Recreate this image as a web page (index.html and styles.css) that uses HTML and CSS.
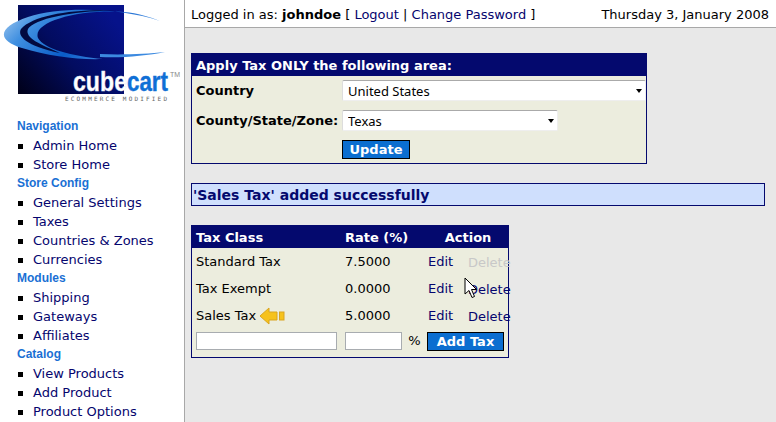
FILE: index.html
```html
<!DOCTYPE html>
<html lang="en">
<head>
    <meta charset="UTF-8">
    <title>CubeCart Admin - Taxes</title>
    <link rel="stylesheet" href="styles.css">
</head>
<body>
    <div class="layout">
        <div class="sidebar">
            <svg class="logo" width="184" height="106" viewBox="0 0 184 106">
                <defs>
                    <linearGradient id="squareFill" x1="0" y1="1" x2="1" y2="0.3">
                        <stop offset="0" stop-color="#000018"/>
                        <stop offset="0.5" stop-color="#020c60"/>
                        <stop offset="1" stop-color="#06128a"/>
                    </linearGradient>
                    <linearGradient id="swooshFill" x1="0" y1="0" x2="1" y2="0.3">
                        <stop offset="0" stop-color="#a9cdf0"/>
                        <stop offset="0.25" stop-color="#3f8fe0"/>
                        <stop offset="0.6" stop-color="#0a5cc8"/>
                        <stop offset="1" stop-color="#5a9ce8"/>
                    </linearGradient>
                </defs>
                <rect x="18" y="5" width="106" height="89" fill="url(#squareFill)"/>
                <path d="M160 21C120 8 62 6 28 17C-2 27-4 40 22 48C48 56 78 60 103 59C72 56 44 49 38 38C32 22 78 9 124 12C138 13 150 17 160 21Z" fill="url(#swooshFill)"/>
                <path d="M122 11C80 8 34 14 21 29C17 36 26 46 60 53C42 45 24 38 28 29C34 18 82 9 122 11Z" fill="#020a40"/>
                <path d="M100 57C122 58 146 56 165 52C146 54 122 55 100 54Z" fill="#3c8ae0"/>
                <text class="logo-word logo-cube" x="73" y="91" textLength="54" lengthAdjust="spacingAndGlyphs">cube</text>
                <text class="logo-word logo-cart" x="127" y="91" textLength="41" lengthAdjust="spacingAndGlyphs">cart</text>
                <text class="logo-tm" x="170" y="77">TM</text>
                <text class="logo-tag" x="65" y="101" textLength="102">ECOMMERCE MODIFIED</text>
            </svg>

            <div class="nav-title">Navigation</div>
            <ul class="nav-list">
                <li><a href="#">Admin Home</a></li>
                <li><a href="#">Store Home</a></li>
            </ul>
            <div class="nav-title">Store Config</div>
            <ul class="nav-list">
                <li><a href="#">General Settings</a></li>
                <li><a href="#">Taxes</a></li>
                <li><a href="#">Countries &amp; Zones</a></li>
                <li><a href="#">Currencies</a></li>
            </ul>
            <div class="nav-title">Modules</div>
            <ul class="nav-list">
                <li><a href="#">Shipping</a></li>
                <li><a href="#">Gateways</a></li>
                <li><a href="#">Affiliates</a></li>
            </ul>
            <div class="nav-title">Catalog</div>
            <ul class="nav-list">
                <li><a href="#">View Products</a></li>
                <li><a href="#">Add Product</a></li>
                <li><a href="#">Product Options</a></li>
            </ul>
        </div>

        <div class="main">
            <div class="topbar">
                <div>Logged in as: <strong>johndoe</strong> [ <a href="#">Logout</a> | <a href="#">Change Password</a> ]</div>
                <div>Thursday 3, January 2008</div>
            </div>

            <div class="content">
                <form class="panel area-panel">
                    <div class="panel-title">Apply Tax ONLY the following area:</div>
                    <div class="area-grid">
                        <label>Country</label>
                        <div class="select-wrap wide">
                            <select><option>United States</option></select>
                        </div>
                        <label>County/State/Zone:</label>
                        <div class="select-wrap narrow">
                            <select><option>Texas</option></select>
                        </div>
                        <span></span>
                        <div><button type="button" class="btn update-btn">Update</button></div>
                    </div>
                </form>

                <div class="notice">'Sales Tax' added successfully</div>

                <div class="panel tax-panel">
                    <table class="tax-table">
                        <thead>
                            <tr>
                                <th class="col-class">Tax Class</th>
                                <th class="col-rate">Rate (%)</th>
                                <th class="col-action" colspan="2">Action</th>
                            </tr>
                        </thead>
                        <tbody>
                            <tr>
                                <td>Standard Tax</td>
                                <td>7.5000</td>
                                <td><a href="#">Edit</a></td>
                                <td class="delete-cell"><span class="disabled">Delete</span></td>
                            </tr>
                            <tr>
                                <td>Tax Exempt</td>
                                <td>0.0000</td>
                                <td><a href="#">Edit</a></td>
                                <td class="delete-cell"><a href="#">Delete</a></td>
                            </tr>
                            <tr>
                                <td>
                                    Sales Tax
                                    <svg class="arrow-icon" width="25" height="18" viewBox="0 0 25 18">
                                        <path d="M0 9L9 1V5H17V13H9V17Z" fill="#f6c21c" stroke="#d9a520" stroke-width="1" stroke-linejoin="round"/>
                                        <rect x="19.5" y="5" width="4.5" height="8" fill="#f6c21c" stroke="#d9a520"/>
                                    </svg>
                                </td>
                                <td>5.0000</td>
                                <td><a href="#">Edit</a></td>
                                <td class="delete-cell"><a href="#">Delete</a></td>
                            </tr>
                            <tr class="add-row">
                                <td><input type="text" class="field name-field"></td>
                                <td><input type="text" class="field rate-field"> %</td>
                                <td colspan="2"><button type="button" class="btn add-btn">Add Tax</button></td>
                            </tr>
                        </tbody>
                    </table>
                </div>
            </div>
        </div>
    </div>

    <svg class="cursor" width="13" height="22" viewBox="0 0 13 22">
        <path d="M1 1V17L5 13.5L8 20.5L10.5 19.5L7.5 12.5H12.5Z" fill="#fff" stroke="#000" stroke-width="1"/>
    </svg>
</body>
</html>
```

FILE: styles.css
```css
* {
    margin: 0;
    padding: 0;
    box-sizing: border-box;
}

html, body {
    height: 100%;
    overflow: hidden;
}

body {
    position: relative;
    font-family: "DejaVu Sans", Verdana, sans-serif;
    font-size: 13px;
    color: #000;
    background: #e8e8e8;
}

a {
    color: #05056e;
    text-decoration: none;
}

.layout {
    display: flex;
    height: 100%;
}

.sidebar {
    width: 185px;
    flex: none;
    height: 100%;
    background: #fff;
    border-right: 1px solid #a8a8a8;
    overflow: hidden;
}

.logo {
    display: block;
    margin-bottom: 11px;
}

.logo-word {
    font-family: "Liberation Sans", Arial, sans-serif;
    font-size: 28px;
    font-weight: bold;
}

.logo-cube {
    fill: #fff;
    stroke: #dfe6f5;
    stroke-width: 0.4;
}

.logo-cart {
    fill: #0f6fd6;
    stroke: #0f6fd6;
    stroke-width: 0.4;
}

.logo-tm {
    font-family: "Liberation Sans", Arial, sans-serif;
    font-size: 7px;
    fill: #888;
}

.logo-tag {
    font-family: "DejaVu Sans Mono", monospace;
    font-size: 6px;
    fill: #666;
}

.nav-title {
    height: 19px;
    line-height: 19px;
    padding-left: 17px;
    font-family: "Liberation Sans", Arial, sans-serif;
    font-size: 12px;
    font-weight: bold;
    color: #1a70d4;
}

.nav-list {
    list-style: none;
}

.nav-list li {
    position: relative;
    height: 19px;
    line-height: 19px;
    padding-left: 33px;
    white-space: nowrap;
}

.nav-list li::before {
    content: "";
    position: absolute;
    left: 18px;
    top: 8px;
    width: 5px;
    height: 5px;
    background: #000;
}

.main {
    flex: 1;
    min-width: 0;
}

.topbar {
    display: flex;
    justify-content: space-between;
    height: 28px;
    padding: 7px 7px 0 6px;
    line-height: 16px;
    background: #fff;
    border-bottom: 1px solid #a8a8a8;
    white-space: nowrap;
}

.content {
    padding: 25px 0 0 6px;
}

.panel {
    background: #ecedde;
    border: 1px solid #04096e;
}

.area-panel {
    width: 456px;
    height: 111px;
}

.panel-title {
    height: 22px;
    line-height: 23px;
    padding-left: 4px;
    background: #04096e;
    color: #fff;
    font-weight: bold;
}

.area-grid {
    display: grid;
    grid-template-columns: 146px 1fr;
    grid-auto-rows: 30px;
    padding: 4px 4px 0 4px;
}

.area-grid label {
    font-weight: bold;
    line-height: 22px;
}

.select-wrap {
    position: relative;
    height: 21px;
}

.select-wrap.wide {
    width: 304px;
}

.select-wrap.narrow {
    width: 216px;
}

.select-wrap select {
    appearance: none;
    display: block;
    width: 100%;
    height: 100%;
    padding-left: 5px;
    font-family: "Noto Sans", Tahoma, sans-serif;
    font-size: 13px;
    color: #000;
    background: #fff;
    border: 1px solid #eee;
    border-top-color: #aaa;
    border-left-color: #ddd;
    border-radius: 2px;
}

.select-wrap::after {
    content: "";
    position: absolute;
    right: 4px;
    top: 9px;
    border-style: solid;
    border-width: 4px 3.5px 0;
    border-color: #000 transparent transparent;
}

.btn {
    font-family: "DejaVu Sans", Verdana, sans-serif;
    font-size: 13px;
    font-weight: bold;
    color: #fff;
    background: #0b6ed0;
    border: 1px solid #000;
}

.update-btn {
    display: block;
    width: 68px;
    height: 19px;
}

.notice {
    width: 574px;
    height: 23px;
    line-height: 23px;
    margin: 19px 0;
    padding-left: 1px;
    background: #cfdffd;
    border: 1px solid #04096e;
    color: #04096e;
    font-size: 14px;
    font-weight: bold;
}

.tax-panel {
    width: 318px;
    height: 133px;
}

.tax-table {
    width: 100%;
    border-collapse: collapse;
    table-layout: fixed;
}

.tax-table th {
    height: 22px;
    background: #04096e;
    color: #fff;
    text-align: left;
}

.col-class {
    width: 153px;
    padding-left: 4px;
}

.col-rate {
    width: 83px;
}

.tax-table .col-action {
    text-align: center;
}

.tax-table td {
    height: 27px;
    white-space: nowrap;
}

.tax-table td:first-child {
    padding-left: 4px;
}

.delete-cell {
    padding-top: 2px;
}

.disabled {
    color: #c8c8c8;
}

.arrow-icon {
    vertical-align: -5px;
}

.tax-table .add-row td {
    height: 24px;
}

.field {
    height: 18px;
    background: #fff;
    border: 1px solid #a8acb0;
    vertical-align: middle;
}

.name-field {
    width: 141px;
}

.rate-field {
    width: 57px;
    margin-right: 2px;
}

.add-btn {
    display: block;
    width: 77px;
    height: 19px;
    margin-left: -1px;
}

.cursor {
    position: absolute;
    left: 464px;
    top: 277px;
}
```
